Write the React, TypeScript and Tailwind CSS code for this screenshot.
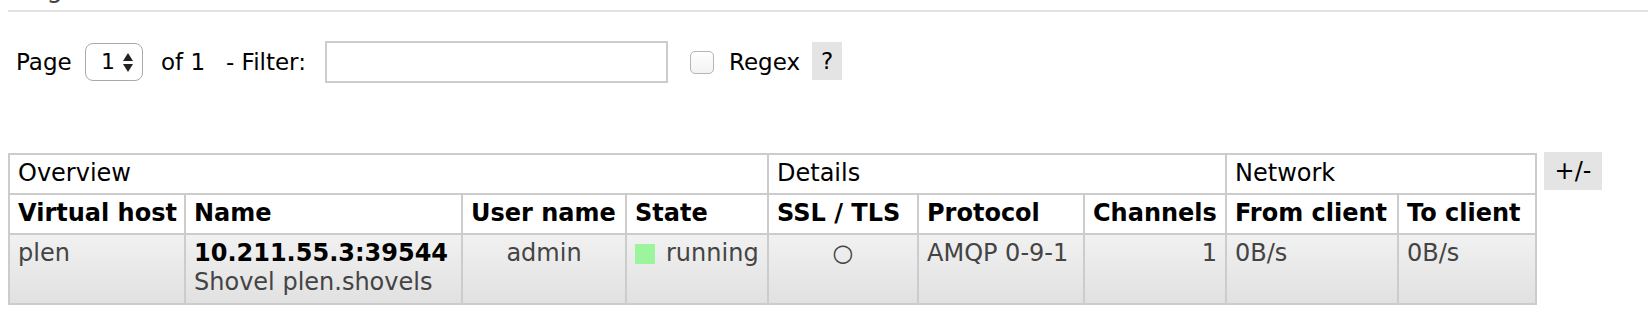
import type { ReactNode } from 'react'

function Cell({ children, className = '' }: { children?: ReactNode; className?: string }) {
  return (
    <div className={`border-r-2 border-b-2 border-[#ccc] px-[8px] pt-[4px] leading-[29px] whitespace-nowrap ${className}`}>
      {children}
    </div>
  )
}

function Arrows() {
  return (
    <svg width="10" height="19" viewBox="0 0 10 19" className="block">
      <polygon points="0,8 5,0 10,8" fill="#222" />
      <polygon points="0,11 10,11 5,19" fill="#222" />
    </svg>
  )
}

export default function App() {
  return (
    <div className="min-h-[326px] bg-white pl-[8px] font-['DejaVu_Sans',Verdana,sans-serif] text-black">
      {/* heading, scrolled mostly out of view */}
      <div className="h-[12px] overflow-hidden border-b-2 border-[#e2e2e2] pl-[8px]">
        <p className="-mt-[27px] text-[26px] leading-[30px] text-[#444]">Pagination</p>
      </div>

      {/* pagination + filter */}
      <div className="mt-[29px] flex h-[42px] items-center pl-[8px] text-[23px] leading-[26px]">
        <span className="w-[69px]">Page</span>
        <div className="flex h-[38px] w-[58px] items-center rounded-[8px] border-[1.5px] border-[#aaa] pl-[15px]">
          <span className="w-[22px] text-[22px]">1</span>
          <Arrows />
        </div>
        <span className="ml-[18px] w-[65px]">of 1</span>
        <span className="w-[99px]">- Filter:</span>
        <div className="h-[42px] w-[343px] border-2 border-[#ccc] bg-white" />
        <div className="ml-[22px] h-[23px] w-[24px] rounded-[5px] border-[1.5px] border-[#b5b5b5] bg-linear-to-b from-white to-[#f2f2f2]" />
        <span className="ml-[15px] w-[83px]">Regex</span>
        <span className="mt-[-3px] flex h-[38px] w-[30px] items-center justify-center bg-[#e4e4e4]">?</span>
      </div>

      {/* connections table */}
      <div className="mt-[70px] flex items-start">
        <div className="grid grid-cols-[176px_277px_164px_142px_150px_166px_142px_172px_138px] border-t-2 border-l-2 border-[#ccc] text-[24px]">
          <Cell className="col-span-4 h-[40px]">Overview</Cell>
          <Cell className="col-span-3 h-[40px]">Details</Cell>
          <Cell className="col-span-2 h-[40px]">Network</Cell>

          <Cell className="h-[40px] font-bold">Virtual host</Cell>
          <Cell className="h-[40px] font-bold">Name</Cell>
          <Cell className="h-[40px] font-bold">User name</Cell>
          <Cell className="h-[40px] font-bold">State</Cell>
          <Cell className="h-[40px] font-bold">SSL / TLS</Cell>
          <Cell className="h-[40px] font-bold">Protocol</Cell>
          <Cell className="h-[40px] font-bold">Channels</Cell>
          <Cell className="h-[40px] font-bold">From client</Cell>
          <Cell className="h-[40px] font-bold">To client</Cell>

          <Cell className="h-[70px] bg-linear-to-b from-[#f1f1f1] to-[#e1e1e1] text-[#444]">plen</Cell>
          <Cell className="h-[70px] bg-linear-to-b from-[#f1f1f1] to-[#e1e1e1] text-[#444]">
            <div className="font-bold text-black">10.211.55.3:39544</div>
            <div>Shovel plen.shovels</div>
          </Cell>
          <Cell className="h-[70px] bg-linear-to-b from-[#f1f1f1] to-[#e1e1e1] text-center text-[#444]">admin</Cell>
          <Cell className="h-[70px] bg-linear-to-b from-[#f1f1f1] to-[#e1e1e1] text-[#444]">
            <div className="flex h-[29px] items-center gap-[11px]">
              <span className="h-[20px] w-[20px] bg-[#9cf59c]" />
              <span>running</span>
            </div>
          </Cell>
          <Cell className="h-[70px] bg-linear-to-b from-[#f1f1f1] to-[#e1e1e1] text-center text-[#444]">○</Cell>
          <Cell className="h-[70px] bg-linear-to-b from-[#f1f1f1] to-[#e1e1e1] text-[#444]">AMQP 0-9-1</Cell>
          <Cell className="h-[70px] bg-linear-to-b from-[#f1f1f1] to-[#e1e1e1] text-right text-[#444]">1</Cell>
          <Cell className="h-[70px] bg-linear-to-b from-[#f1f1f1] to-[#e1e1e1] text-[#444]">0B/s</Cell>
          <Cell className="h-[70px] bg-linear-to-b from-[#f1f1f1] to-[#e1e1e1] text-[#444]">0B/s</Cell>
        </div>
        <button className="-mt-px ml-[7px] flex h-[38px] w-[58px] items-center justify-center bg-[#e4e4e4] text-[24px]">
          +/-
        </button>
      </div>
    </div>
  )
}
